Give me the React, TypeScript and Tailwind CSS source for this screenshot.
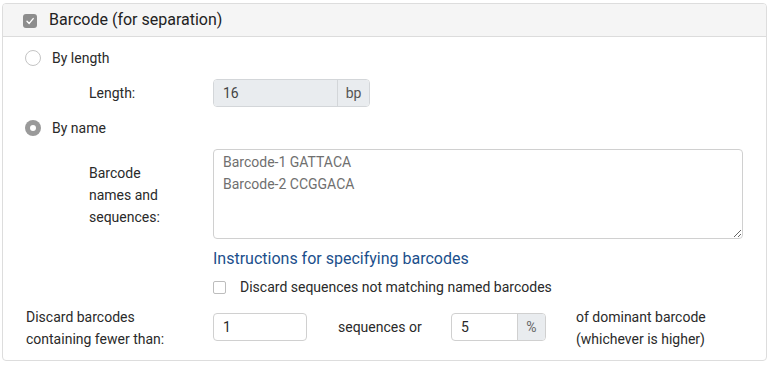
import React from "react";

const font = { fontFamily: "Roboto, 'Liberation Sans', sans-serif" };

function Radio({ checked }: { checked?: boolean }) {
  return checked ? (
    <span className="flex h-[16px] w-[16px] shrink-0 items-center justify-center rounded-full bg-[#9a9a9a]">
      <span className="h-[6px] w-[6px] rounded-full bg-white" />
    </span>
  ) : (
    <span className="h-[16px] w-[16px] shrink-0 rounded-full border border-[#c4c4c4] bg-white" />
  );
}

export default function App() {
  return (
    <div style={font} className="bg-white pt-[3px] pl-[2px] text-[14px] text-[#2a2a2a]">
      <div className="w-[765px] h-[358px] rounded-[4px] border border-[#dddddd] overflow-hidden">
        {/* Header */}
        <div className="flex h-[33px] items-center border-b border-[#dcdcdc] bg-[#f5f5f5] pl-[20px]">
          <span className="flex h-[14px] w-[14px] items-center justify-center rounded-[3px] bg-[#8d8d8d] mt-[2px]">
            <svg width="10" height="10" viewBox="0 0 10 10" fill="none">
              <path d="M2 5.2 L4.2 7.4 L8.2 2.6" stroke="white" strokeWidth="1.4" strokeLinecap="round" strokeLinejoin="round" />
            </svg>
          </span>
          <span className="ml-[12px] text-[16px] text-[#222]">Barcode (for separation)</span>
        </div>

        {/* Body */}
        <div className="flex flex-col pt-[6px]">
          {/* By length */}
          <div className="flex h-[30px] items-center pl-[22px]">
            <Radio />
            <span className="ml-[11px]">By length</span>
          </div>

          {/* Length */}
          <div className="mt-[6px] flex h-[28px] items-center pl-[86px]">
            <span className="w-[124px]">Length:</span>
            <div className="flex h-[28px] w-[157px] overflow-hidden rounded-[4px] border border-[#d3d6d9]">
              <div className="flex flex-1 items-center bg-[#e9ecef] pl-[9px] text-[#444]">16</div>
              <div className="flex w-[32px] items-center justify-center border-l border-[#d3d6d9] bg-[#e9ecef] text-[#555]">bp</div>
            </div>
          </div>

          {/* By name */}
          <div className="mt-[6px] flex h-[30px] items-center pl-[22px]">
            <Radio checked />
            <span className="ml-[11px]">By name</span>
          </div>

          {/* Textarea row */}
          <div className="mt-[6px] flex pl-[86px]">
            <div className="w-[124px] pt-[13px] leading-[22px]">
              Barcode
              <br />
              names and
              <br />
              sequences:
            </div>
            <textarea
              className="h-[90px] w-[530px] resize-y rounded-[4px] border border-[#d0d0d0] px-[9px] py-[1px] leading-[22px] text-[#6f6f6f] outline-none"
              style={font}
              defaultValue={"Barcode-1 GATTACA\nBarcode-2 CCGGACA"}
            />
          </div>

          {/* Link */}
          <div className="mt-[9px] pl-[210px] text-[16px] leading-[22px] text-[#1b4f8c]">
            Instructions for specifying barcodes
          </div>

          {/* Checkbox */}
          <div className="mt-[6px] flex h-[22px] items-center pl-[210px]">
            <span className="h-[13px] w-[13px] rounded-[2px] border border-[#bdbdbd] bg-white" />
            <span className="ml-[14px]">Discard sequences not matching named barcodes</span>
          </div>

          {/* Bottom row */}
          <div className="mt-[8px] flex pl-[23px] leading-[22px]">
            <div className="w-[187px]">
              Discard barcodes
              <br />
              containing fewer than:
            </div>
            <div className="mt-[7px] flex h-[28px] w-[94px] items-center rounded-[4px] border border-[#d0d0d0] pl-[9px]">1</div>
            <div className="mt-[7px] flex h-[28px] w-[144px] items-center pl-[31px]">sequences or</div>
            <div className="mt-[7px] flex h-[28px] w-[95px] overflow-hidden rounded-[4px] border border-[#d0d0d0]">
              <div className="flex flex-1 items-center pl-[9px]">5</div>
              <div className="flex w-[28px] items-center justify-center border-l border-[#d0d0d0] bg-[#e9ecef] text-[#666]">%</div>
            </div>
            <div className="ml-[30px]">
              of dominant barcode
              <br />
              (whichever is higher)
            </div>
          </div>
        </div>
      </div>
    </div>
  );
}
